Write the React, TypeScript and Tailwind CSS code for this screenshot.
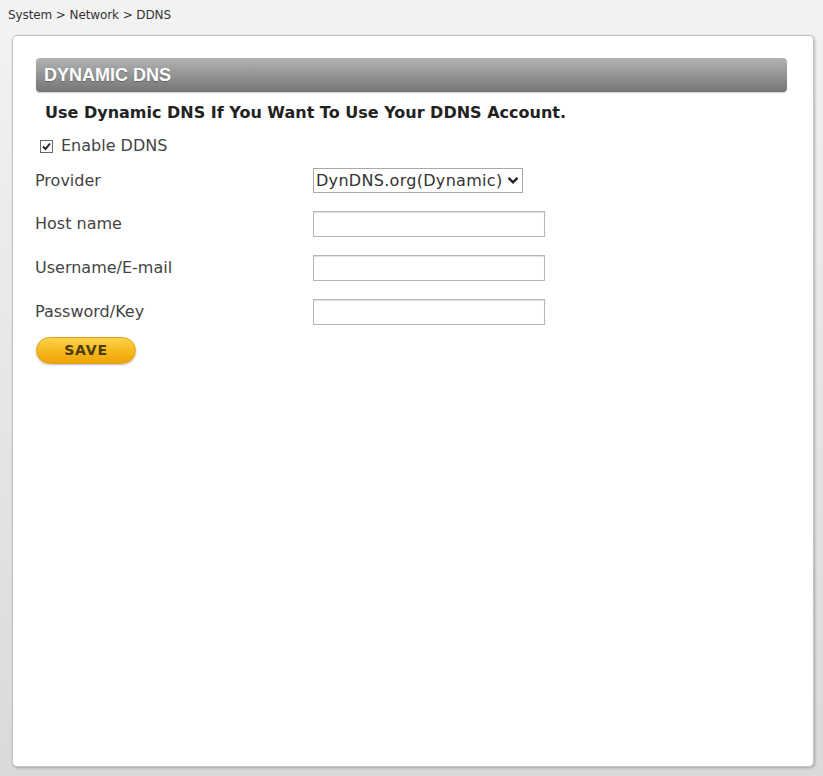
import React from "react";

export default function App() {
  const labelCls = "w-[278px] text-[16px] text-[#444]";
  const inputCls = "w-[232px] h-[26px] border border-[#b5b5b5] bg-white shadow-[inset_0_1px_1px_rgba(0,0,0,0.12)]";
  return (
    <div className="w-[823px] h-[776px] flex flex-col bg-gradient-to-b from-[#f3f3f3] to-[#dadada] font-['DejaVu_Sans',sans-serif] overflow-hidden">
      <div className="h-[35px] pl-[8px] pt-[6px] text-[12px] text-[#333] font-['DejaVu_Sans',sans-serif] tracking-[-0.1px]">
        System &gt; Network &gt; DDNS
      </div>
      <div className="ml-[12px] mr-[9px] mb-[9px] flex-1 bg-white rounded-[5px] border border-[#c4c4c4] shadow-[1px_1px_3px_rgba(0,0,0,0.25)] pt-[22px] pl-[23px] pr-[26px]">
        <div className="h-[34px] rounded-[4px] bg-gradient-to-b from-[#b4b4b4] to-[#757575] flex items-center pl-[8px] shadow-[0_1px_1px_rgba(0,0,0,0.2)]">
          <span className="text-white font-bold text-[18px] font-['Liberation_Sans',sans-serif] [text-shadow:0_1px_1px_rgba(0,0,0,0.3)]">
            DYNAMIC DNS
          </span>
        </div>
        <div className="pl-[9px] mt-[12px] text-[16px] font-bold text-[#222] leading-[18px]">
          Use Dynamic DNS If You Want To Use Your DDNS Account.
        </div>
        <div className="flex items-center mt-[15px] pl-[4px] text-[16px] text-[#444] leading-[18px]">
          <span className="w-[13px] h-[13px] border border-[#666] bg-white flex items-center justify-center mr-[8px]">
            <svg width="11" height="11" viewBox="0 0 11 11">
              <path d="M2 5.5 L4.5 8 L9 2.5" stroke="#222" strokeWidth="1.9" fill="none" />
            </svg>
          </span>
          Enable DDNS
        </div>
        <div className="flex flex-col -ml-[1px]">
          <div className="flex items-center mt-[13px] h-[25px]">
            <div className={labelCls}>Provider</div>
            <div className="w-[210px] h-[25px] border border-[#a9a9a9] bg-white flex items-center justify-between pl-[2px] pr-[3px] text-[16px] tracking-[0.3px] text-[#333]">
              <span>DynDNS.org(Dynamic)</span>
              <svg width="12" height="9" viewBox="0 0 12 9">
                <path d="M1.5 1.8 L6 6.3 L10.5 1.8" stroke="#222" strokeWidth="2.4" fill="none" />
              </svg>
            </div>
          </div>
          <div className="flex items-center mt-[18px] h-[26px]">
            <div className={labelCls}>Host name</div>
            <div className={inputCls} />
          </div>
          <div className="flex items-center mt-[18px] h-[26px]">
            <div className={labelCls}>Username/E-mail</div>
            <div className={inputCls} />
          </div>
          <div className="flex items-center mt-[18px] h-[26px]">
            <div className={labelCls}>Password/Key</div>
            <div className={inputCls} />
          </div>
        </div>
        <button className="mt-[12px] w-[100px] h-[27px] rounded-full bg-gradient-to-b from-[#fcd34a] via-[#f6b91a] to-[#eea40a] border border-[#e2a21a] shadow-[0_1px_2px_rgba(0,0,0,0.25)] text-[14px] font-bold text-[#4a3b10] font-['DejaVu_Sans',sans-serif] tracking-[0.8px]">
          SAVE
        </button>
      </div>
    </div>
  );
}
